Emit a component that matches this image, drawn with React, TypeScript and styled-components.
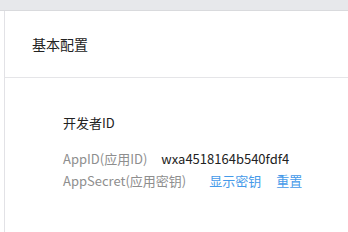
import * as React from "react";
import styled, { createGlobalStyle } from "styled-components";

const GlobalStyle = createGlobalStyle`
  body {
    margin: 0;
    background: #ffffff;
    font-family: "Microsoft YaHei", "Noto Sans CJK SC", "Noto Sans", sans-serif;
    font-size: 14px;
    color: #222222;
  }
`;

const App = () => {
  return (
    <>
      <GlobalStyle />
      <TopBar />
      <Panel>
        <Header>基本配置</Header>
        <Section>
          <Title>开发者ID</Title>
          <Rows>
            <Row>
              <Label $gap={14}>AppID(应用ID)</Label>
              <Value>wxa4518164b540fdf4</Value>
            </Row>
            <Row>
              <Label $gap={23}>AppSecret(应用密钥)</Label>
              <Link href="#">显示密钥</Link>
              <Link href="#">重置</Link>
            </Row>
          </Rows>
        </Section>
      </Panel>
    </>
  );
};

const TopBar = styled.div`
  height: 10px;
  background-color: #e7e8eb;
  border-bottom: 1px solid #d9dadd;
`;
const Panel = styled.main`
  margin-left: 4px;
  border-left: 1px solid #e2e2e6;
  background: #ffffff;
  height: 221px;
`;
const Header = styled.h2`
  margin: 0;
  height: 66px;
  display: flex;
  align-items: center;
  padding-left: 27px;
  font-size: 14px;
  font-weight: normal;
  color: #222222;
  border-bottom: 1px solid #e5e5e8;
`;
const Section = styled.section`
  padding: 34px 0 0 58px;
  font-size: 13px;
`;
const Title = styled.h3`
  margin: 0;
  font-size: 13px;
  font-weight: normal;
  line-height: 22px;
  color: #222222;
`;
const Rows = styled.div`
  margin-top: 14px;
  display: flex;
  flex-direction: column;
`;
const Row = styled.div`
  display: flex;
  align-items: center;
  line-height: 22px;
`;
const Label = styled.span<{ $gap: number }>`
  color: #8e8e8e;
  margin-right: ${(p) => p.$gap}px;
`;
const Value = styled.span`
  color: #222222;
`;
const Link = styled.a`
  color: #459ae9;
  text-decoration: none;
  margin-right: 15px;
`;

export default App;
